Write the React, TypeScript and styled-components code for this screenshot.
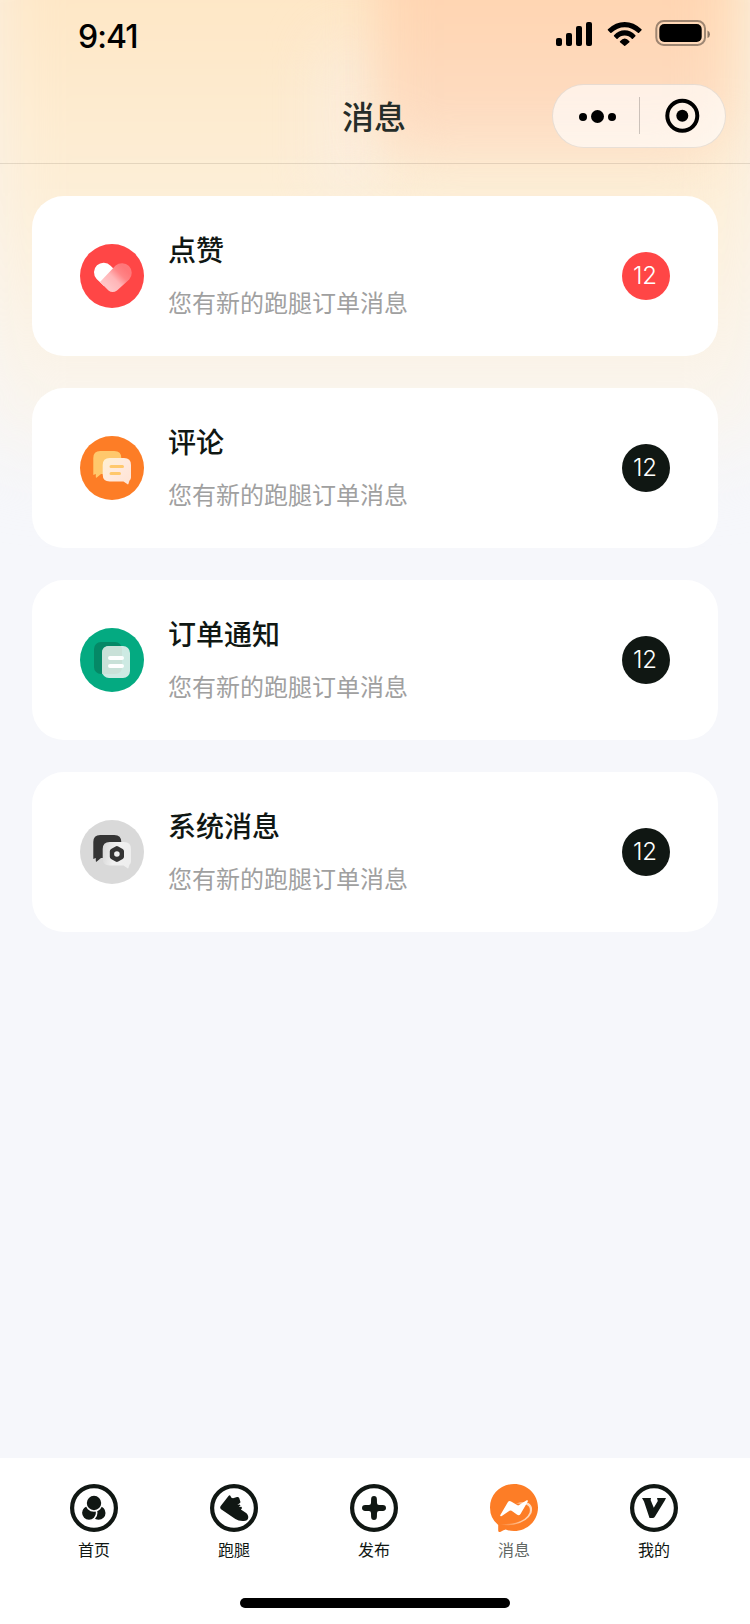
import React from "react";
import styled, { createGlobalStyle } from "styled-components";

const GlobalStyle = createGlobalStyle`
  * { box-sizing: border-box; }
  body {
    margin: 0;
    background: #f6f7fb;
    font-family: "Noto Sans CJK SC", "Noto Sans", sans-serif;
  }
`;

const INK = "#101713";

const Screen = styled.div`
  position: relative;
  display: flex;
  flex-direction: column;
  width: 750px;
  height: 1624px;
  overflow: hidden;
  background: #f6f7fb;
`;

const Glow = styled.div<{ $x: number; $y: number; $w: number; $h: number; $fill: string; $blur: number }>`
  position: absolute;
  left: ${(p) => p.$x}px;
  top: ${(p) => p.$y}px;
  width: ${(p) => p.$w}px;
  height: ${(p) => p.$h}px;
  border-radius: 48px;
  background: ${(p) => p.$fill};
  filter: blur(${(p) => p.$blur}px);
`;

const Header = styled.header`
  position: relative;
  height: 164px;
  border-bottom: 1px solid rgba(60, 45, 30, 0.13);
`;

const StatusBar = styled.div`
  display: flex;
  align-items: flex-start;
  justify-content: space-between;
  height: 84px;
  padding: 0 40px 0 78px;
`;

const Clock = styled.time`
  margin-top: 17px;
  font: 500 32px/40px Inter, sans-serif;
  letter-spacing: -0.9px;
  color: #000;
`;

const StatusIcons = styled.svg`
  margin-top: 18px;
`;

const NavBar = styled.div`
  display: grid;
  grid-template-columns: 1fr auto 1fr;
  align-items: center;
  height: 64px;
  padding: 0 24px;
`;

const PageTitle = styled.h1`
  grid-column: 2;
  margin: 0;
  padding: 0 2px 3px 0;
  font-size: 32px;
  line-height: 48px;
  font-weight: 500;
  color: #262d29;
`;

const Capsule = styled.div`
  justify-self: end;
  display: flex;
  align-items: center;
  width: 174px;
  height: 64px;
  border: 1px solid rgba(0, 0, 0, 0.09);
  border-radius: 32px;
  background: rgba(255, 255, 255, 0.62);
`;

const List = styled.main`
  position: relative;
  flex: 1;
  display: flex;
  flex-direction: column;
  gap: 32px;
  padding: 32px 32px 0;
`;

const Card = styled.article`
  display: flex;
  align-items: center;
  height: 160px;
  padding: 0 48px;
  border-radius: 32px;
  background: #fff;
`;

const CardIcon = styled.svg`
  flex: none;
  width: 64px;
  height: 64px;
`;

const CardText = styled.div`
  flex: 1;
  margin-left: 24px;
  padding-bottom: 4px;
`;

const CardTitle = styled.h2`
  margin: 0;
  font-size: 28px;
  line-height: 40px;
  font-weight: 500;
  color: ${INK};
`;

const CardNote = styled.p`
  margin: 16px 0 0;
  font-size: 24px;
  line-height: 34px;
  font-weight: 400;
  color: #a0a0a0;
`;

const Badge = styled.span<{ $color: string }>`
  display: grid;
  place-items: center;
  width: 48px;
  height: 48px;
  padding-right: 2px;
  border-radius: 50%;
  background: ${(p) => p.$color};
  color: #fff;
  font: 300 24px/34px Inter, sans-serif;
`;

const TabBar = styled.nav`
  position: relative;
  height: 166px;
  padding: 26px 24px 0;
  background: #fff;
`;

const Tabs = styled.div`
  display: grid;
  grid-template-columns: repeat(5, 140px);
  height: 114px;
`;

const Tab = styled.a<{ $active?: boolean }>`
  display: flex;
  flex-direction: column;
  align-items: center;
  font-size: 16px;
  line-height: 24px;
  color: ${(p) => (p.$active ? "#626764" : INK)};
`;

const TabIcon = styled.svg`
  width: 48px;
  height: 48px;
  margin-bottom: 5px;
  overflow: visible;
`;

const HomeIndicator = styled.div`
  width: 270px;
  height: 10px;
  margin: 0 auto;
  border-radius: 5px;
  background: #000;
`;

const bubble =
  "M13.3 39V22q0-7 7-7h14q7 0 7 7v9q0 7-7 7H21l-4.2 3.5q-1 .6-1-.8V38z";
const frontBubble =
  "M29.7 22H44q7 0 7 7v12.5q0 2-1.600 3.300l-.9 3q-.4 1-1.300.3l-3.700-2.600H29.700q-7 0-7-7V29q0-7 7-7z";

const LikeIcon = () => (
  <CardIcon viewBox="0 0 64 64">
    <defs>
      <linearGradient id="heart" gradientUnits="userSpaceOnUse" x1="28" y1="42" x2="45" y2="25">
        <stop offset="0" stopColor="#ffc4c6" />
        <stop offset=".4" stopColor="#ffb5b7" />
        <stop offset=".72" stopColor="#ff8486" />
        <stop offset="1" stopColor="#ff7779" />
      </linearGradient>
    </defs>
    <circle cx="32" cy="32" r="32" fill="#ff4646" />
    <path d="M16.600 34.900a9.600 9.600 0 0 1 14-13.200l6 6L24 42z" fill="#fff" />
    <path d="M20 37.900 35.600 21.600a9.700 9.700 0 0 1 13.600 13.800L37 46.500q-4.500 3.200-8.500 0z" fill="url(#heart)" />
  </CardIcon>
);

const CommentIcon = () => (
  <CardIcon viewBox="0 0 64 64">
    <defs>
      <linearGradient id="cream" x1="0" y1="0" x2="1" y2="1">
        <stop offset="0" stopColor="#fff0cf" />
        <stop offset=".5" stopColor="#ffe9dd" />
        <stop offset="1" stopColor="#ffe3d3" />
      </linearGradient>
    </defs>
    <circle cx="32" cy="32" r="32" fill="#fd7d26" />
    <path d={bubble} fill="#ffc86c" />
    <path d={frontBubble} fill="url(#cream)" />
    <path d="M31 30.500H42.500M31 37.500H39.500" stroke="#ffc86c" strokeWidth="3" strokeLinecap="round" />
  </CardIcon>
);

const OrderIcon = () => (
  <CardIcon viewBox="0 0 64 64">
    <circle cx="32" cy="32" r="32" fill="#04aa81" />
    <rect x="14" y="14" width="28" height="32" rx="7" fill="#058866" />
    <rect x="22" y="18" width="28" height="32" rx="7" fill="#cdeae3" />
    <path d="M22 25q0-7 7-7h12q1 2 1 4v17q0 7-7 7H22.200z" fill="#c9e1d8" />
    <path d="M30 30H42M30 38H42" stroke="#fff" strokeWidth="4" strokeLinecap="round" />
  </CardIcon>
);

const SystemIcon = () => (
  <CardIcon viewBox="0 0 64 64">
    <defs>
      <linearGradient id="silver" x1="0" y1="0" x2="1" y2=".2">
        <stop offset="0" stopColor="#d6d6d6" />
        <stop offset=".5" stopColor="#f0f0f0" />
        <stop offset="1" stopColor="#eeeeee" />
      </linearGradient>
    </defs>
    <circle cx="32" cy="32" r="32" fill="#d9d9d9" />
    <path d={bubble} fill="#343434" />
    <path d={frontBubble} fill="url(#silver)" />
    <path
      fillRule="evenodd"
      d="M35.600 26.400q1.300-.8 2.600 0l4.500 2.600q1.300.8 1.300 2.300v5.400q0 1.500-1.300 2.300l-4.500 2.600q-1.300.8-2.600 0L31.100 39q-1.300-.8-1.300-2.300v-5.400q0-1.500 1.300-2.300zM36.900 31.200a2.800 2.800 0 1 0 0 5.600 2.800 2.800 0 0 0 0-5.600z"
      fill="#343434"
    />
  </CardIcon>
);

const Ring = () => <circle cx="24" cy="24" r="21.900" fill="#fff" stroke={INK} strokeWidth="4.200" />;

const HomeTab = () => (
  <TabIcon viewBox="0 0 48 48">
    <Ring />
    <circle cx="28.600" cy="28.900" r="6.900" fill={INK} />
    <circle cx="19" cy="28.800" r="7.700" fill={INK} stroke="#fff" strokeWidth="1.600" />
    <circle cx="24" cy="19" r="8" fill={INK} stroke="#fff" strokeWidth="1.600" />
  </TabIcon>
);

const ShoeTab = () => (
  <TabIcon viewBox="0 0 48 48">
    <Ring />
    <path
      d="M10.500 22.200 18.500 12q1.300-1.600 2.100.2.500 2 2.400 2l4-1.100q1.500-.3 2.200.8l1.200 3.800q.1 1-.7 1.500l-2.300 1.500 2.200-.1.900.8-1.700 1.500 2.500-.2.800 1.200-1.200 1.500 5.600 3.900q2.700 3 1.300 5.900-1 2-4.800 1.700-4.500.1-7.600-2L10.700 25q-1-1.500-.2-2.800z"
      fill={INK}
    />
  </TabIcon>
);

const PublishTab = () => (
  <TabIcon viewBox="0 0 48 48">
    <Ring />
    <path
      d="M24 12q2.800 0 2.900 3.200l.1 3.800q.1 2 2 2l3.800.1q3.200.1 3.200 2.900t-3.200 2.900l-3.800.1q-1.900.1-2 2l-.1 3.800Q26.800 36 24 36t-2.900-3.200L21 29q-.1-1.900-2-2l-3.800-.1Q12 26.800 12 24t3.200-2.900l3.800-.1q1.900-.1 2-2l.1-3.800Q21.200 12 24 12z"
      fill={INK}
    />
  </TabIcon>
);

const MessageTab = () => (
  <TabIcon viewBox="0 0 48 48">
    <defs>
      <linearGradient id="trail" gradientUnits="userSpaceOnUse" x1="43" y1="20" x2="10" y2="42">
        <stop offset="0" stopColor="#ffe0c8" />
        <stop offset=".5" stopColor="#ffc79e" />
        <stop offset="1" stopColor="#fd7d26" />
      </linearGradient>
    </defs>
    <path
      d="M24 0C37.300 0 48 10.300 48 23.500S37.300 47 24 47q-4.500 0-8.300-1.400-2 .2-5 2.100-2.400 1-2.500-1.300V41Q0 34.500 0 23.500C0 10.300 10.700 0 24 0z"
      fill="#fd7d26"
    />
    <path d="M26 19.500q7-2 12.500-.5 5 3 3 10-4 9-18 11.700-8 1.300-14.500-.5 9 .5 17-1.500 10.500-3 13.500-10 1.500-6-3-8-4.500-1.500-10.500-1.200z" fill="url(#trail)" />
    <path
      d="M10.200 31.300 17.800 18.200q1.300-2 3.300-.8l6 3.700q1 .6 2 0l7.600-4.800q1.600-.5 1.100 1.100L30.500 30q-1.300 2-3.300.8l-5.600-4q-1-.6-2.100 0l-7.700 5.200q-1.700.7-1.600-.7z"
      fill="#fff"
    />
  </TabIcon>
);

const MineTab = () => (
  <TabIcon viewBox="0 0 48 48">
    <Ring />
    <path d="M12 14h9l-.4 2 3.200 7.800 4-6.800-.8-3h9l-1.200 2.600L25 32.500q-.8 1.500-2.500 1.500h-3L14 17.500z" fill={INK} />
  </TabIcon>
);

const messages = [
  { title: "点赞", note: "您有新的跑腿订单消息", count: 12, color: "#ff4646", Icon: LikeIcon },
  { title: "评论", note: "您有新的跑腿订单消息", count: 12, color: INK, Icon: CommentIcon },
  { title: "订单通知", note: "您有新的跑腿订单消息", count: 12, color: INK, Icon: OrderIcon },
  { title: "系统消息", note: "您有新的跑腿订单消息", count: 12, color: INK, Icon: SystemIcon },
];

const tabs = [
  { label: "首页", Icon: HomeTab },
  { label: "跑腿", Icon: ShoeTab },
  { label: "发布", Icon: PublishTab },
  { label: "消息", Icon: MessageTab, active: true },
  { label: "我的", Icon: MineTab },
];

export default function App() {
  return (
    <Screen>
      <GlobalStyle />
      <Glow $x={-24} $y={-100} $w={798} $h={560} $blur={38} $fill="linear-gradient(#fee7c6 18%, #fdeed6 50%, rgba(251,243,230,.95) 80%, rgba(249,245,238,.6))" />
      <Glow $x={326} $y={40} $w={44} $h={160} $blur={28} $fill="rgba(251,240,232,.7)" />
      <Glow $x={378} $y={-80} $w={350} $h={238} $blur={24} $fill="linear-gradient(#ffd5b2 35%, #fddcc2 85%, #fde4cd)" />
      <Header>
        <StatusBar>
          <Clock>9:41</Clock>
          <StatusIcons width="155" height="30" viewBox="555 18 155 30">
            <rect x="556" y="38" width="6" height="8" rx="2" />
            <rect x="566" y="33" width="6" height="13" rx="2" />
            <rect x="576" y="26" width="6" height="20" rx="2" />
            <rect x="586" y="22" width="6" height="24" rx="2" />
            <path d="M607.900 29.300Q615.500 22 624.700 22T641.500 29.300q.5.500 0 1l-2.400 2.500q-.6.500-1.200 0-5.800-5.600-13.200-5.600t-13.200 5.600q-.6.500-1.200 0l-2.400-2.500q-.5-.5 0-1z" />
            <path d="M614 35.300Q618.600 30.300 624.700 30.300T635.400 35.300q.4.500 0 1l-2.500 2.500q-.6.500-1.100 0-2.900-3.200-7.100-3.200t-7.100 3.200q-.5.500-1.100 0l-2.500-2.500q-.4-.5 0-1z" />
            <path d="M620 41.200q4.700-5.400 9.400 0 .4.500 0 1l-4.200 3.500q-.5.500-1 0L620 42.200q-.4-.5 0-1z" />
            <rect x="656.300" y="21" width="48.700" height="24" rx="7.500" fill="none" stroke="#000" strokeOpacity=".38" strokeWidth="2" />
            <path d="M707.500 30.500q2.500 1 2.500 3.700t-2.500 3.700z" fillOpacity=".45" />
            <rect x="659.300" y="24" width="42.400" height="18" rx="5" />
          </StatusIcons>
        </StatusBar>
        <NavBar>
          <PageTitle>消息</PageTitle>
          <Capsule>
            <svg width="172" height="62" viewBox="553 85 172 62">
              <circle cx="583" cy="117" r="4" />
              <circle cx="597.500" cy="116.500" r="6.500" />
              <circle cx="612" cy="117" r="4" />
              <path d="M639.500 97V134" stroke="#000" strokeOpacity=".2" />
              <circle cx="682.300" cy="115.700" r="15" fill="none" stroke="#000" strokeWidth="4" />
              <circle cx="682.300" cy="115.700" r="6" />
            </svg>
          </Capsule>
        </NavBar>
      </Header>
      <List>
        {messages.map(({ title, note, count, color, Icon }) => (
          <Card key={title}>
            <Icon />
            <CardText>
              <CardTitle>{title}</CardTitle>
              <CardNote>{note}</CardNote>
            </CardText>
            <Badge $color={color}>{count}</Badge>
          </Card>
        ))}
      </List>
      <TabBar>
        <Tabs>
          {tabs.map(({ label, Icon, active }) => (
            <Tab key={label} $active={active}>
              <Icon />
              {label}
            </Tab>
          ))}
        </Tabs>
        <HomeIndicator />
      </TabBar>
    </Screen>
  );
}
